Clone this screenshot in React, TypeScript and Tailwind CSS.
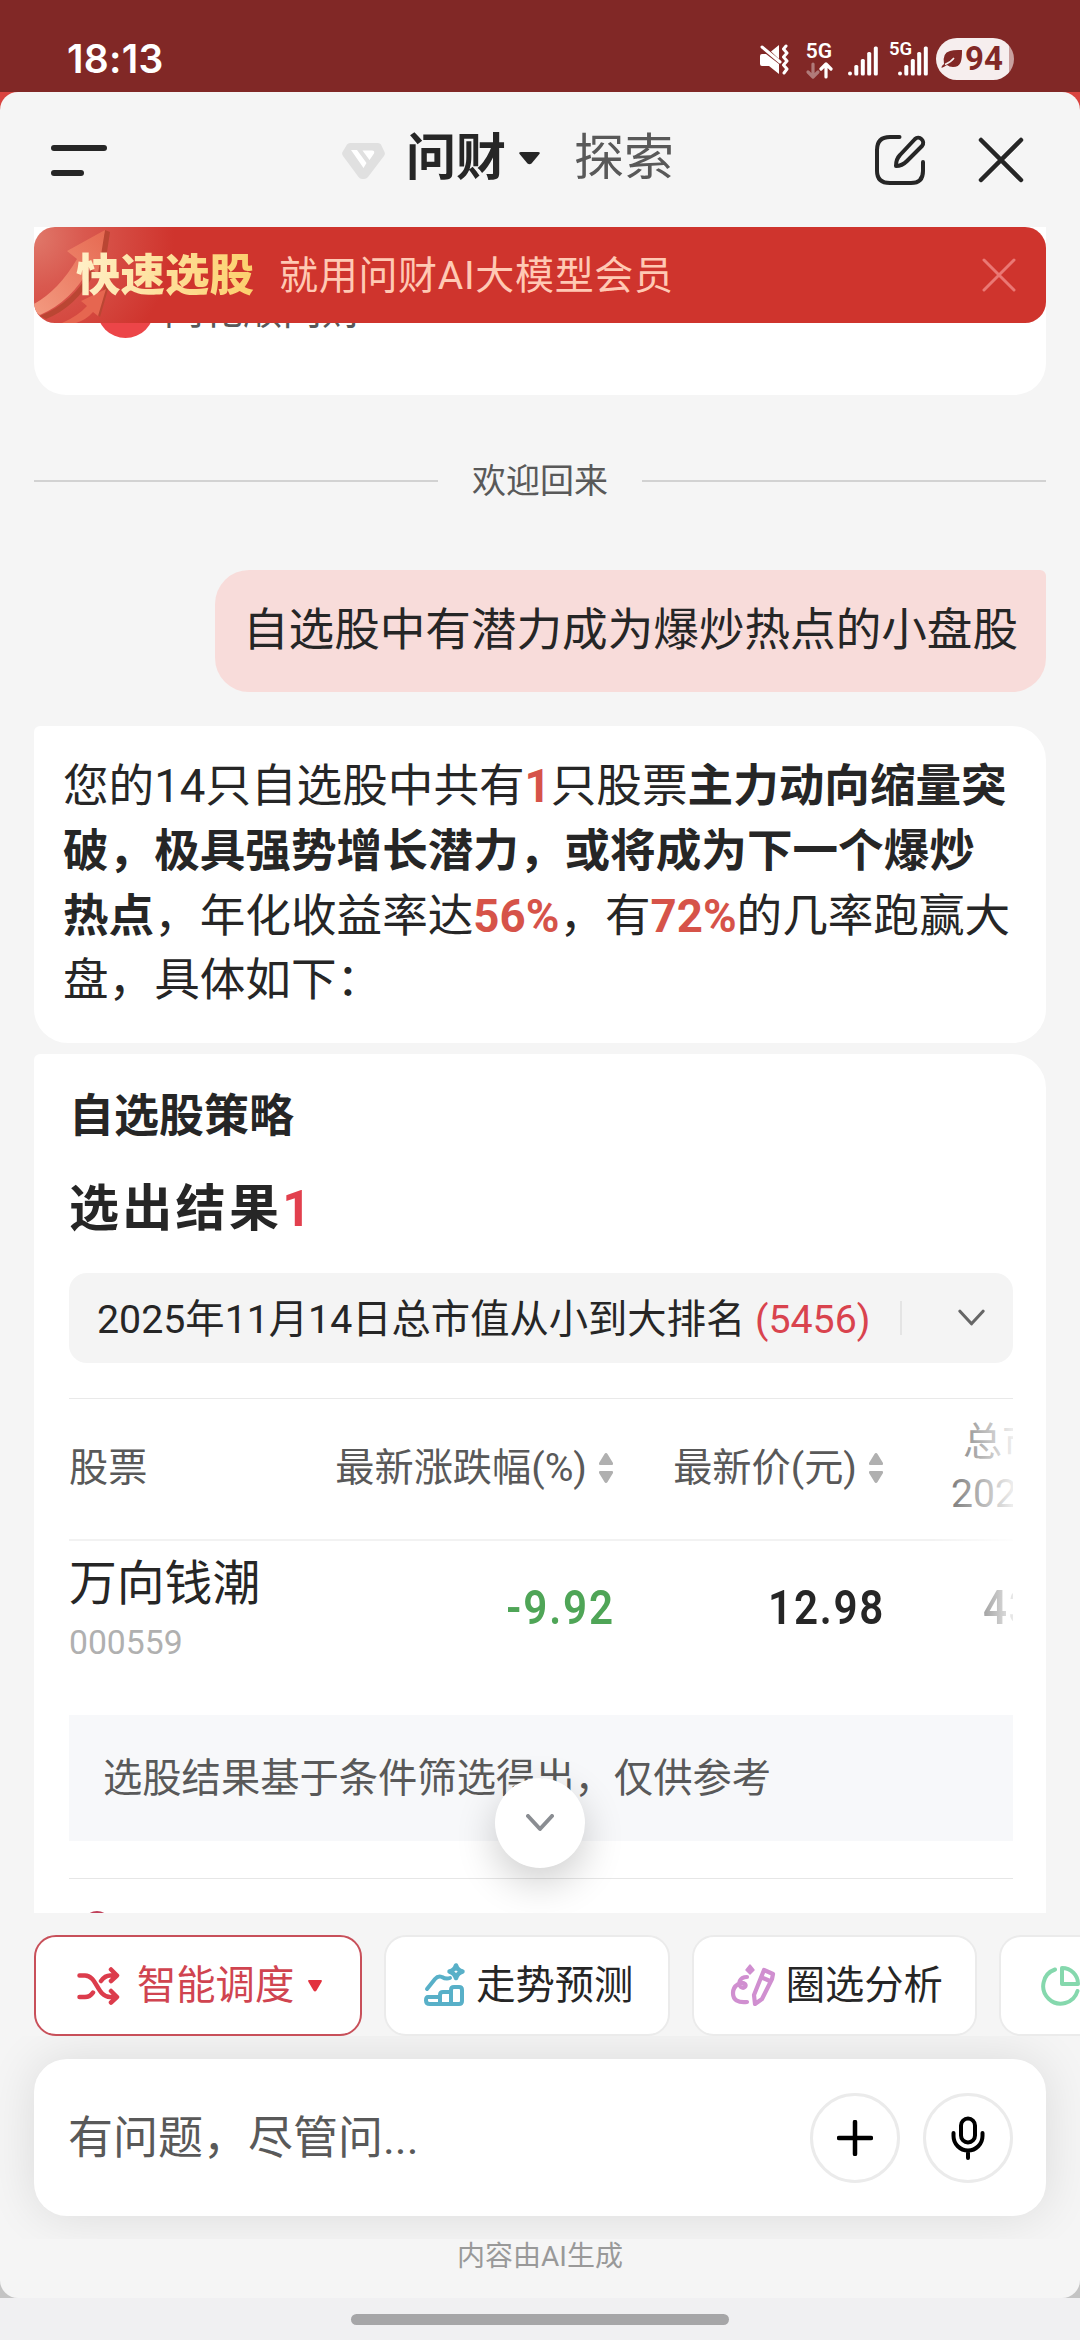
import { ReactNode } from "react";

interface Stock {
  name: string;
  code: string;
  change: string;
  price: string;
  cap: string;
}

interface Chip {
  label: string;
  icon: ReactNode;
}

const stocks: Stock[] = [
  { name: "万向钱潮", code: "000559", change: "-9.92", price: "12.98", cap: "43" },
];

const TrendIcon = () => (
  <svg width="44" height="44" viewBox="0 0 44 44" fill="none" stroke="#58b0c8" strokeWidth="4" strokeLinecap="round" strokeLinejoin="round">
    <path d="M4 27 L12 17 Q15 13.500 19 15 Q23 17.500 27 16" />
    <path d="M33 3.500 Q34.500 8.500 39.500 9.500 Q34.500 11 33 16 Q31.500 11 26.500 9.500 Q31.500 8.500 33 3.500 Z" strokeWidth="4.500" />
    <path d="M5 35 H17 V42 H7 Q3 42 3 38.500 Q3 35 5 35 Z M17 42 V33 Q17 30 20 30 H28 V42 Z M28 42 V28 Q28 25 31 25 H36 Q39 25 39 28 V39 Q39 42 36 42 Z" />
  </svg>
);

const CircleSelectIcon = () => (
  <svg width="48" height="44" viewBox="0 0 48 44" fill="none" stroke="#d08fd0" strokeWidth="4.200" strokeLinecap="round" strokeLinejoin="round">
    <path d="M18 15 C10 15 9 22 12 25 C15 27 18 24 16 22 C13 19 4 23 4 31 C4 38 9 41 18 40" />
    <path d="M35 8 L44 12 L43 17 L33 37 L26 42 L25 33 Z M34 16 L41 19" />
    <path d="M21 3 L25 8 L21 12 L17 8 Z" fill="#d08fd0" strokeWidth="1.500" />
  </svg>
);

const PieIcon = () => (
  <svg width="42" height="42" viewBox="0 0 42 42" fill="none" stroke="#85d8ad" strokeWidth="4" strokeLinecap="round" strokeLinejoin="round">
    <path d="M15 4.500 A17.500 17.500 0 1 0 37.500 26" />
    <path d="M22 3 V19 H38 C38 10 31 3 22 3 Z" />
  </svg>
);

const chips: Chip[] = [
  { label: "走势预测", icon: <TrendIcon /> },
  { label: "圈选分析", icon: <CircleSelectIcon /> },
];

const Signal = () => (
  <svg width="30" height="30" viewBox="0 0 30 30" fill="#fff">
    <circle cx="2" cy="27.500" r="2" />
    <rect x="6.300" y="19" width="4" height="10.500" rx="1.500" />
    <rect x="12.800" y="13" width="4" height="16.500" rx="1.500" />
    <rect x="19.200" y="6" width="4" height="23.500" rx="1.500" />
    <rect x="25.800" y="0.500" width="4" height="29" rx="1.500" />
  </svg>
);

const StatusBar = () => (
  <div className="flex h-[92px] items-start justify-between bg-[#812826] pl-[67px] pr-[66px] text-white">
    <span className="mt-[36px] font-[Inter,sans-serif] text-[39px] font-semibold leading-[46px] tracking-[0.3px]">18:13</span>
    <div className="mt-[38px] flex h-[42px]">
      <svg className="mt-[6px]" width="31" height="32" viewBox="0 0 31 32">
        <path d="M1 12 Q1 10 3 10 H7 L20 20 V30 L10 22 H3 Q1 22 1 20 Z M20 1 V15 L12 7.500 Z" fill="#fff" />
        <path d="M3 3 L21 18" stroke="#fff" strokeWidth="3" strokeLinecap="round" />
        <path d="M27 2 L24.500 5 L28 9 L24.500 13 L28 17 L24.500 21 L28 25 L25 29" stroke="#fff" strokeWidth="3" fill="none" strokeLinecap="round" strokeLinejoin="round" />
      </svg>
      <div className="ml-[15px] mt-[4px] flex w-[28px] flex-col items-center">
        <span className="text-[21px] font-semibold leading-[19px]">5G</span>
        <svg className="mt-px" width="28" height="18" viewBox="0 0 28 18" fill="none" strokeWidth="3.200" strokeLinecap="round" strokeLinejoin="round">
          <path d="M8 2 V14.500 M3 10 L8 15 L13 10" stroke="#b07b79" />
          <path d="M21 15 V3 M16 7 L21 2 L26 7" stroke="#fff" />
        </svg>
      </div>
      <div className="ml-[15px] mt-[8px]">
        <Signal />
      </div>
      <div className="relative ml-[20px] mt-[8px]">
        <span className="absolute -left-[9px] -top-[5px] text-[18.500px] font-semibold leading-[17px]">5G</span>
        <Signal />
      </div>
      <div className="ml-[8px] flex w-[78px] items-center overflow-hidden rounded-full bg-[linear-gradient(90deg,#f6eeee_93%,#c9a09f_93%)] pl-[5px] text-[#812826]">
        <svg width="22" height="20" viewBox="0 0 22 20" fill="#812826">
          <path d="M21 1 C21 12 20 18 12 18 Q8 18 6 16 Q3 18 0.500 19 Q0 17 3 15 Q1 4 9 2 Q13 0.500 21 1 Z" />
          <path d="M4 15.500 Q10 13 13 9" stroke="#f6eeee" strokeWidth="1.500" fill="none" />
        </svg>
        <span className="ml-[2px] font-[Roboto,sans-serif] text-[33px] font-bold leading-[42px]">94</span>
      </div>
    </div>
  </div>
);

const Header = () => (
  <div className="flex h-[135px] shrink-0 items-center pl-[51px] pr-[56px]">
    <div className="flex w-[56px] flex-col gap-[19px] pt-[2px]">
      <div className="h-[6px] w-[56px] rounded-full bg-[#262626]" />
      <div className="h-[6px] w-[33px] rounded-full bg-[#262626]" />
    </div>
    <svg className="ml-[235px] mt-[3px]" width="43" height="36" viewBox="0 0 43 36">
      <path d="M8 0 H36 Q38 0 39 1.500 L42.500 9 Q43.500 11 42 13 L26 34 Q24.500 36 22 36 H20 Q18 36 16.500 34 L1 13 Q-0.500 11 0.500 9 L5 1.500 Q6 0 8 0 Z" fill="#e0e0e0" />
      <path d="M9 7 H15 L24.500 20 L21.500 25 Z M20.500 7.500 H30 Q33 7.500 32 10.500 L27.500 17 Z" fill="#fff" />
    </svg>
    <span className="ml-[21px] mt-[-4px] text-[50px] font-bold leading-[60px] text-[#262626]">问财</span>
    <svg className="ml-[13px] mt-[-2px]" width="21" height="13" viewBox="0 0 21 13">
      <path d="M2 0 H19 Q22 0 20 2.500 L12.500 11.500 Q10.500 13 8.500 11.500 L1 2.500 Q-1 0 2 0 Z" fill="#262626" />
    </svg>
    <span className="ml-[34px] mt-[-4px] text-[50px] leading-[60px] text-[#595959]">探索</span>
    <svg className="ml-auto" width="52" height="52" viewBox="0 0 52 52" fill="none" stroke="#262626" strokeWidth="4" strokeLinecap="round" strokeLinejoin="round">
      <path d="M25.500 3 H16 Q3 3 3 16 V37 Q3 49 16 49 H37 Q49 49 49 37 V28" />
      <path d="M22 32 C22 27 23 24 26 21 L41 5 C45 1 52 7 48 12 L33 27 C30 30 27 32 22 32 Z" />
    </svg>
    <svg className="ml-[52px]" width="46" height="46" viewBox="0 0 46 46" stroke="#262626" strokeWidth="4.500" strokeLinecap="round">
      <path d="M3 3 L43 43 M43 3 L3 43" />
    </svg>
  </div>
);

const Banner = () => (
  <div className="absolute left-0 top-0 flex h-[96px] w-[1012px] items-center overflow-hidden rounded-[21px] bg-[#cf342d] bg-[radial-gradient(circle_at_0px_10px,#e0786a_0px,#d9594f_50px,#cf342d_140px)]">
    <svg className="absolute left-0 top-0" width="110" height="96" viewBox="0 0 110 96">
      <defs>
        <linearGradient id="arrow" x1="0" y1="1" x2="1" y2="0">
          <stop offset="0" stopColor="#f39a80" />
          <stop offset="1" stopColor="#e66a52" />
        </linearGradient>
      </defs>
      <path d="M71 3 L76 5 L69 52 L62 44 Z M71 57 L75 59 L66 90 L62 86 Z M6 89 Q40 75 57 42 L60 47 Q42 80 12 92 Z" fill="#ba4633" />
      <path d="M0 77 Q25 63 43 32 L33 24 L71 3 L64 47 L56 40 Q38 74 6 88 L0 84 Z" fill="url(#arrow)" />
      <path d="M28 96 Q44 89 53 79 L47 74 L72 62 L64 89 L59 85 Q52 93 42 96 Z" fill="#e66650" />
    </svg>
    <span className="relative ml-[42px] mt-[2px] bg-[linear-gradient(90deg,#fff0c8,#fccf6c)] bg-clip-text text-[44.500px] font-black leading-[60px] text-transparent">快速选股</span>
    <span className="ml-[25px] mt-[2px] text-[39px] leading-[60px] tracking-[0.700px] text-[#ffc9b4]">就用问财AI大模型会员</span>
    <svg className="ml-auto mr-[30px]" width="34" height="34" viewBox="0 0 34 34" stroke="#ea7874" strokeWidth="3" strokeLinecap="round">
      <path d="M2 2 L32 32 M32 2 L2 32" />
    </svg>
  </div>
);

const SortArrows = () => (
  <svg width="16" height="32" viewBox="0 0 16 32" fill="#b0b0b0">
    <path d="M8 1 Q9 1 9.500 2 L15 11 Q15.500 13 14 13 H2 Q0.500 13 1 11 L6.500 2 Q7 1 8 1 Z M8 31 Q9 31 9.500 30 L15 21 Q15.500 19 14 19 H2 Q0.500 19 1 21 L6.500 30 Q7 31 8 31 Z" />
  </svg>
);

const Chevron = ({ color, width, stroke }: { color: string; width: number; stroke: number }) => (
  <svg width={width} height="18" viewBox="0 0 28 18" fill="none" stroke={color} strokeWidth={stroke} strokeLinecap="round" strokeLinejoin="round">
    <path d="M2 2 L14 15 L26 2" />
  </svg>
);

const ResultTable = () => (
  <div className="relative mt-[35px] h-[317px] overflow-hidden border-t border-[#e9e9e9]">
    <div className="flex h-[142px] items-center border-b-2 border-[#f2f2f2] pb-[2px] text-[39.200px] leading-[52px] text-[#595959]">
      <span className="w-[230px] shrink-0">股票</span>
      <div className="flex w-[315px] shrink-0 items-center justify-end gap-[11px]">
        <span>最新涨跌幅(%)</span>
        <SortArrows />
      </div>
      <div className="flex w-[270px] shrink-0 items-center justify-end gap-[11px]">
        <span>最新价(元)</span>
        <SortArrows />
      </div>
      <div className="ml-[67px] w-[160px] shrink-0 whitespace-nowrap">
        <p className="pl-[12px]">总市值</p>
        <p>2025</p>
      </div>
    </div>
    {stocks.map((stock) => (
      <div key={stock.code} className="flex h-[136px] items-center">
        <div className="w-[230px] shrink-0 pt-px">
          <p className="text-[47.800px] leading-[64px] text-[#262626]">{stock.name}</p>
          <p className="mt-[2px] text-[33.700px] leading-[50px] text-[#b0b0b0]">{stock.code}</p>
        </div>
        <span className="mt-[-2px] w-[316px] shrink-0 origin-right scale-x-[0.86] text-right text-[49px] font-semibold leading-[60px] tracking-[2.200px] text-[#4fa557]">{stock.change}</span>
        <span className="mt-[-2px] w-[270px] shrink-0 origin-right scale-x-[0.86] text-right text-[49px] font-semibold leading-[60px] tracking-[2px] text-[#262626]">{stock.price}</span>
        <span className="ml-[98px] mt-[-2px] shrink-0 origin-left scale-x-[0.86] text-[49px] font-semibold leading-[60px] tracking-[2px] text-[#262626]">{stock.cap}</span>
      </div>
    ))}
    <div className="absolute right-0 top-[-1px] h-[320px] w-[82px] bg-linear-to-r from-transparent to-white/90" />
  </div>
);

const Conversation = () => (
  <div className="relative mx-[34px] h-[1686px] shrink-0 overflow-hidden">
    <div className="h-[168px] rounded-b-[32px] bg-white pl-[63px] pt-[54px]">
      <div className="flex items-center gap-[10px]">
        <div className="size-[57px] rounded-full bg-[#ec4548]" />
        <span className="pt-[2px] text-[39.500px] leading-[40px] text-[#595959]">同花顺问财</span>
      </div>
    </div>
    <Banner />

    <div className="mt-[62px] flex h-[48px] items-center justify-between">
      <div className="h-[2px] w-[404px] bg-[#d2d2d2]" />
      <span className="text-[34px] leading-[48px] text-[#595959]">欢迎回来</span>
      <div className="h-[2px] w-[404px] bg-[#d2d2d2]" />
    </div>

    <div className="ml-auto mt-[65px] flex h-[122px] w-[831px] items-center justify-center rounded-[34px] rounded-tr-[6px] bg-[#f8dcda] text-[45.600px] leading-[64px] text-[#262626]">
      自选股中有潜力成为爆炒热点的小盘股
    </div>

    <div className="mt-[34px] h-[317px] whitespace-nowrap rounded-[34px] rounded-tl-[6px] bg-white pl-[29px] pt-[29px] text-[45.600px] leading-[64.800px] text-[#262626]">
      您的14只自选股中共有<b className="text-[#d65349]">1</b>只股票<b>主力动向缩量突</b>
      <br />
      <b>破，极具强势增长潜力，或将成为下一个爆炒</b>
      <br />
      <b>热点</b>，年化收益率达<b className="text-[#d65349]">56%</b>，有<b className="text-[#d65349]">72%</b>的几率跑赢大
      <br />
      盘，具体如下：
    </div>

    <div className="mt-[11px] h-[900px] rounded-tl-[6px] rounded-tr-[34px] bg-white pl-[35px] pr-[33px] pt-[33px] text-[#262626]">
      <h2 className="text-[45px] font-bold leading-[60px]">自选股策略</h2>
      <h3 className="mt-[27px] text-[50px] font-bold leading-[70px] tracking-[3.300px]">
        选出结果<span className="text-[#e2404e]">1</span>
      </h3>
      <div className="mt-[29px] flex h-[90px] items-center rounded-[18px] bg-[#f4f4f4] pl-[28px] pr-[28px] text-[39.300px]">
        <span className="whitespace-nowrap pt-[4px]">
          2025年11月14日总市值从小到大排名 <span className="text-[#d9434e]">(5456)</span>
        </span>
        <div className="ml-auto mr-[56px] h-[34px] w-[2px] bg-[#e4e4e4]" />
        <Chevron color="#666666" width={27} stroke={3.2} />
      </div>
      <ResultTable />
      <div className="flex h-[126px] items-center bg-[#f7f8fa] pl-[34px] pt-[2px] text-[39.300px] leading-[56px] text-[#595959]">选股结果基于条件筛选得出，仅供参考</div>
      <div className="mt-[37px] h-px bg-[#e6e6e6]" />
      <div className="ml-[14px] mt-[32px] size-[28px] rounded-full bg-[#c0405a]" />
    </div>

    <div className="absolute bottom-[45px] left-[461px] flex size-[90px] items-center justify-center rounded-full bg-white shadow-[0_14px_40px_rgba(0,0,0,0.2)]">
      <Chevron color="#8a8d92" width={28} stroke={4} />
    </div>
  </div>
);

const ChipRow = () => (
  <div className="flex h-[123px] shrink-0 gap-[22px] overflow-hidden pl-[34px] pt-[22px] text-[39.300px] leading-[60px] text-[#262626]">
    <div className="flex h-[101px] w-[328px] shrink-0 items-center rounded-[22px] border-2 border-[#c8505a] bg-white pl-[41px] text-[#d04450]">
      <svg width="43" height="38" viewBox="0 0 43 38" fill="none" stroke="#dc3c4c" strokeWidth="4.500" strokeLinecap="round" strokeLinejoin="round">
        <path d="M2.500 8.500 H8 C20 8.500 20 30 33 30 H39 M34 24 L40 30 L34 35.500 M2.500 30 H8 Q13 30 16 25.500 M24 14 Q28 8.500 33 8.500 H39 M34 2.500 L40 8.500 L34 14" />
      </svg>
      <span className="ml-[17px]">智能调度</span>
      <svg className="ml-[14px]" width="14" height="12" viewBox="0 0 14 12">
        <path d="M1 0 H13 Q14.500 0 13.500 2 L8.500 10.500 Q7 12.500 5.500 10.500 L0.500 2 Q-0.500 0 1 0 Z" fill="#e2323f" />
      </svg>
    </div>
    {chips.map((chip) => (
      <div key={chip.label} className="flex h-[101px] w-[285.500px] shrink-0 items-center justify-center gap-[9px] rounded-[22px] border-2 border-[#ebebeb] bg-white pl-[3px]">
        <div className="mt-[-4px]">{chip.icon}</div>
        <span>{chip.label}</span>
      </div>
    ))}
    <div className="flex h-[101px] w-[285px] shrink-0 items-center rounded-[22px] border-2 border-[#ebebeb] bg-white pl-[39px]">
      <PieIcon />
    </div>
  </div>
);

const InputBar = () => (
  <div className="h-[203px] shrink-0 overflow-hidden px-[34px] pt-[23px]">
    <div className="flex h-[157px] items-center rounded-[33px] bg-white pl-[34px] pr-[33px] shadow-[0_0_50px_rgba(0,0,0,0.11)]">
      <span className="pt-[2px] text-[45px] leading-[64px] text-[#595959]">有问题，尽管问...</span>
      <div className="ml-auto flex size-[90px] items-center justify-center rounded-full border-[3px] border-[#ebebeb]">
        <svg width="36" height="36" viewBox="0 0 36 36" stroke="#000" strokeWidth="4.500" strokeLinecap="round">
          <path d="M18 2 V34 M2 18 H34" />
        </svg>
      </div>
      <div className="ml-[23px] flex size-[90px] items-center justify-center rounded-full border-[3px] border-[#ebebeb]">
        <svg width="34" height="44" viewBox="0 0 34 44" fill="none" stroke="#000" strokeWidth="4" strokeLinecap="round">
          <rect x="10" y="2.500" width="14" height="24" rx="7" />
          <path d="M2.500 17 V20 A14.500 14.500 0 0 0 31.500 20 V17 M17 35 V42" />
        </svg>
      </div>
    </div>
  </div>
);

const App = () => {
  return (
    <div className="h-[2340px] w-[1080px] overflow-hidden bg-[linear-gradient(#d9433f_0px,#d9433f_1100px,#c4c4c4_1100px)] font-[Roboto,'Noto_Sans_CJK_SC',sans-serif]">
      <StatusBar />
      <div className="flex h-[2206px] flex-col overflow-hidden rounded-[18px] bg-[#f5f5f5]">
        <Header />
        <Conversation />
        <ChipRow />
        <InputBar />
        <p className="mt-[-2px] text-center text-[28px] leading-[40px] text-[#999999]">内容由AI生成</p>
      </div>
      <div className="flex h-[42px] justify-center bg-[#f0f0f2] pt-[16px]">
        <div className="h-[11px] w-[378px] rounded-full bg-[#a6a6a8]" />
      </div>
    </div>
  );
};

export default App;
